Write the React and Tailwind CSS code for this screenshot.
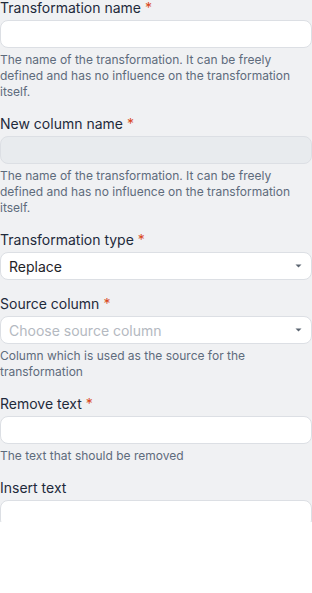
const fields = [
  {
    label: "Transformation name",
    required: true,
    kind: "input",
    help: "The name of the transformation. It can be freely defined and has no influence on the transformation itself.",
  },
  {
    label: "New column name",
    required: true,
    kind: "disabled",
    help: "The name of the transformation. It can be freely defined and has no influence on the transformation itself.",
  },
  { label: "Transformation type", required: true, kind: "select", value: "Replace" },
  {
    label: "Source column",
    required: true,
    kind: "select",
    placeholder: "Choose source column",
    help: "Column which is used as the source for the transformation",
  },
  { label: "Remove text", required: true, kind: "input", help: "The text that should be removed" },
  { label: "Insert text", required: false, kind: "input" },
]

function Caret() {
  return (
    <svg width="7" height="4" viewBox="0 0 7 4" className="shrink-0">
      <path d="M0.5 0.5h6L3.5 3.5z" fill="#5b6470" />
    </svg>
  )
}

function Control({ field }) {
  if (field.kind === "select") {
    return (
      <div className="flex h-7 w-full items-center justify-between rounded-lg border border-[#dcdfe4] bg-white pl-2 pr-[9px] text-[14px]">
        {field.value ? (
          <span className="text-[#1f2328]">{field.value}</span>
        ) : (
          <span className="text-[#b4b9c1]">{field.placeholder}</span>
        )}
        <Caret />
      </div>
    )
  }
  return (
    <div
      className={`h-7 w-full rounded-lg border border-[#dcdfe4] ${
        field.kind === "disabled" ? "bg-[#e8ebee]" : "bg-white"
      }`}
    />
  )
}

export default function App() {
  return (
    <div className="h-[522px] overflow-hidden bg-[#f0f1f3] font-['Inter',sans-serif]">
      <div className="flex flex-col gap-4">
        {fields.map((field) => (
          <div key={field.label}>
            <label className="mb-1 block text-[14px] leading-4 text-[#1e2a3b]">
              {field.label}
              {field.required && <span className="ml-1 text-[#d9481c]">*</span>}
            </label>
            <Control field={field} />
            {field.help && (
              <p className="mt-1 text-xs leading-4 text-[#5e6b7c]">{field.help}</p>
            )}
          </div>
        ))}
      </div>
    </div>
  )
}
